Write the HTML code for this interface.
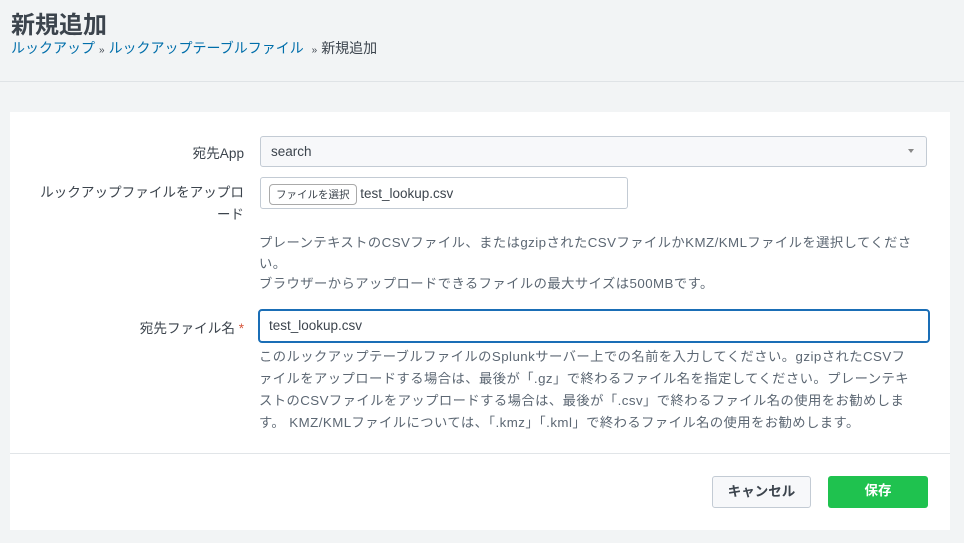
<!DOCTYPE html>
<html><head><meta charset="utf-8"><style>
*{box-sizing:border-box;margin:0;padding:0}
body{width:964px;height:543px;background:#f2f4f5;font-family:"Liberation Sans","Noto Sans CJK JP",sans-serif;color:#3c444d;position:relative;overflow:hidden}
.a{position:absolute}
h1{position:absolute;left:11px;top:5px;font-size:24px;font-weight:bold;color:#3c444d}
.bc{left:11px;top:38px;font-size:14px;color:#3c444d}
.bc a{color:#006eaa;text-decoration:none}
.bc span{font-size:10px;margin:0 4px}
.hr{left:0;top:81px;width:964px;height:1px;background:#dfe3e6}
.panel{left:10px;top:112px;width:940px;height:418px;background:#fff}
.lbl{font-size:13.6px;color:#3c444d;text-align:right;width:234px;left:10px}
.help{left:259px;font-size:13.3px;color:#5c6773;white-space:nowrap;letter-spacing:0.45px}
</style></head><body>
<h1>新規追加</h1>
<div class="a bc"><a>ルックアップ</a><span>»</span><a>ルックアップテーブルファイル</a> <span>»</span>新規追加</div>
<div class="a hr"></div>
<div class="a panel"></div>
<div class="a lbl" style="top:142px">宛先App</div>
<div class="a" style="left:260px;top:136px;width:667px;height:31px;background:#f7f8fa;border:1px solid #c3cbd4;border-radius:3px;font-size:13.5px;padding:7px 10px;color:#3c444d">search<span style="position:absolute;right:12px;top:12px;border-left:3px solid transparent;border-right:3px solid transparent;border-top:4px solid #888"></span></div>
<div class="a lbl" style="top:182px;line-height:22px">ルックアップファイルをアップロ<br>ード</div>
<div class="a" style="left:260px;top:177px;width:368px;height:32px;border:1px solid #c3cbd4;border-radius:3px;font-size:13.5px;padding:6px 8px;color:#3c444d"><span style="display:inline-block;font-size:10.5px;border:1px solid #aaa;border-radius:4px;padding:2px 6px;background:#fff;vertical-align:middle">ファイルを選択</span> test_lookup.csv</div>
<div class="a help" style="top:233px;line-height:20.5px">プレーンテキストのCSVファイル、またはgzipされたCSVファイルかKMZ/KMLファイルを選択してくださ<br>い。<br>ブラウザーからアップロードできるファイルの最大サイズは500MBです。</div>
<div class="a lbl" style="top:317px">宛先ファイル名 <span style="color:#d6563c">*</span></div>
<div class="a" style="left:258px;top:309px;width:672px;height:34px;border:2.5px solid #1a6eb6;border-radius:4px;font-size:13.5px;padding:7px 9px;color:#3c444d">test_lookup.csv</div>
<div class="a help" style="top:346px;line-height:22px">このルックアップテーブルファイルのSplunkサーバー上での名前を入力してください。gzipされたCSVフ<br>ァイルをアップロードする場合は、最後が「.gz」で終わるファイル名を指定してください。プレーンテキ<br>ストのCSVファイルをアップロードする場合は、最後が「.csv」で終わるファイル名の使用をお勧めしま<br>す。 KMZ/KMLファイルについては、「.kmz」「.kml」で終わるファイル名の使用をお勧めします。</div>
<div class="a" style="left:10px;top:453px;width:940px;height:1px;background:#e1e5e8"></div>
<div class="a" style="left:712px;top:476px;width:99px;height:32px;background:#f7f8fa;border:1px solid #c3cbd4;border-radius:3px;font-size:13.5px;font-weight:bold;text-align:center;line-height:29px;color:#3c444d">キャンセル</div>
<div class="a" style="left:828px;top:476px;width:100px;height:32px;background:#1fc24f;border-radius:3px;font-size:13.5px;font-weight:bold;text-align:center;line-height:30px;color:#fff">保存</div>
</body></html>
